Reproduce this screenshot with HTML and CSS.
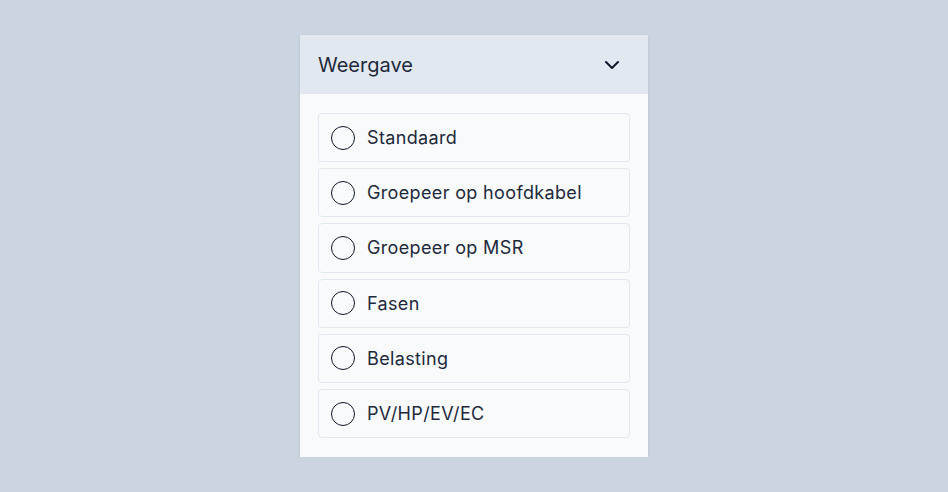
FILE: index.html
```html
<!DOCTYPE html>
<html>
<head>
<meta charset="utf-8">
<link rel="stylesheet" href="styles.css">
</head>
<body>
<div class="page">
  <div class="card">
    <div class="card-header">
      <span class="title">Weergave</span>
      <svg class="chevron" width="20" height="20" viewBox="0 0 20 20" fill="none" stroke="#0f172a" stroke-width="2" stroke-linecap="round" stroke-linejoin="round"><path d="M4 7l6 6 6-6"/></svg>
    </div>
    <div class="card-body">
      <label class="option"><span class="radio"></span><span class="label">Standaard</span></label>
      <label class="option"><span class="radio"></span><span class="label">Groepeer op hoofdkabel</span></label>
      <label class="option"><span class="radio"></span><span class="label">Groepeer op MSR</span></label>
      <label class="option"><span class="radio"></span><span class="label">Fasen</span></label>
      <label class="option"><span class="radio"></span><span class="label">Belasting</span></label>
      <label class="option"><span class="radio"></span><span class="label">PV/HP/EV/EC</span></label>
    </div>
  </div>
</div>
</body>
</html>
```
FILE: styles.css
```css
html, body {
  margin: 0;
  padding: 0;
  background: #cbd5e1;
  font-family: "Inter", "Liberation Sans", sans-serif;
  color: #1e293b;
}
.page {
  display: flex;
  justify-content: center;
  padding-top: 35px;
}
.card {
  width: 348px;
  background: #f8fafc;
  box-shadow: 0 1px 3px rgba(15, 23, 42, 0.12);
}
.card-header {
  height: 59px;
  background: #e2e8f0;
  display: flex;
  align-items: center;
  justify-content: space-between;
  padding: 0 26px 0 18px;
}
.title {
  font-size: 20px;
  color: #1e293b;
}
.chevron {
  display: block;
}
.card-body {
  padding: 19px 18px 19px 18px;
  display: flex;
  flex-direction: column;
  gap: 6px;
}
.option {
  height: 47.2px;
  border: 1px solid #e2e8f0;
  border-radius: 4px;
  display: flex;
  align-items: center;
  padding: 0 12px;
  gap: 12px;
  background: #f8fafc;
}
.radio {
  width: 22px;
  height: 22px;
  border: 1.3px solid #0f172a;
  border-radius: 50%;
  box-sizing: content-box;
  flex: none;
}
.label {
  font-size: 18px;
  letter-spacing: 0.35px;
  color: #1e293b;
}
```
